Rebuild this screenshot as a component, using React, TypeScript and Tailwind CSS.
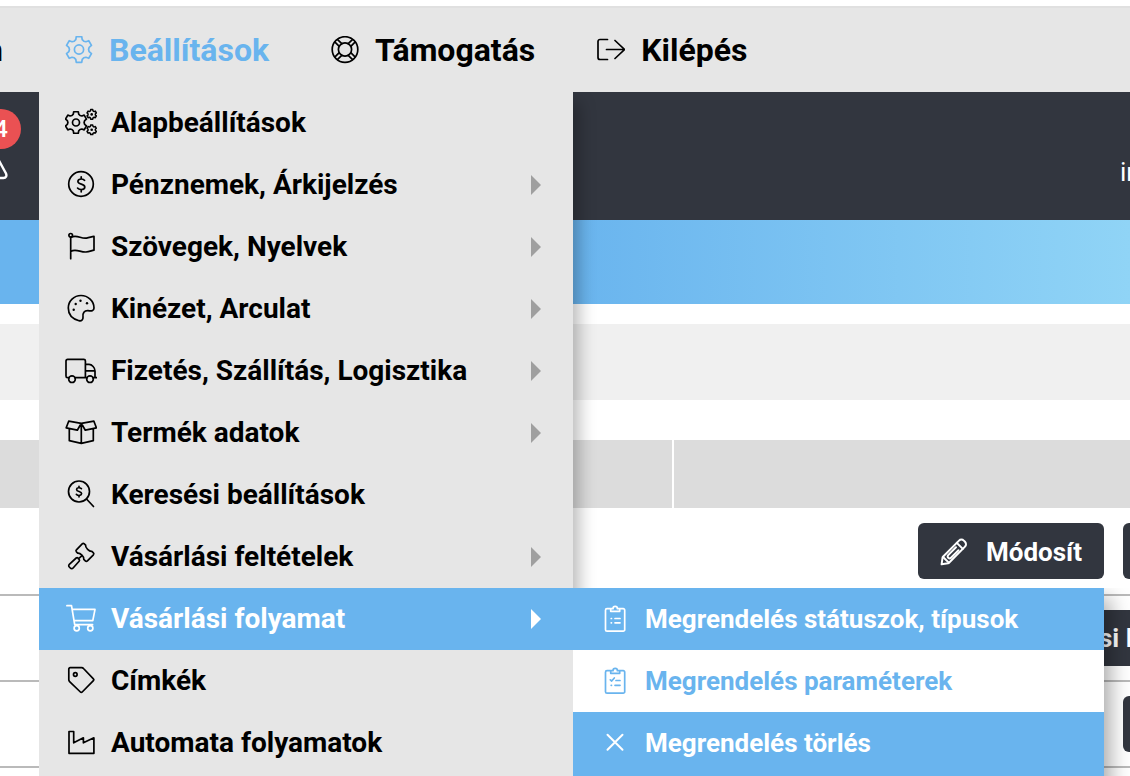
import type { ReactNode } from "react";

function Svg({ children, size = 32, stroke = 1.7 }: { children: ReactNode; size?: 28 | 32; stroke?: number }) {
    return (
        <svg
            className="shrink-0"
            width={size}
            height={size}
            viewBox={`0 0 ${size} ${size}`}
            fill="none"
            stroke="currentColor"
            strokeWidth={stroke}
            strokeLinecap="round"
            strokeLinejoin="round"
            aria-hidden="true"
        >
            {children}
        </svg>
    );
}

// six teeth, the first one points up
function gear(cx: number, cy: number, outer: number, inner: number) {
    const points: string[] = [];
    for (let i = 0; i < 6; i++) {
        const mid = i * 60 - 90;
        [[-18, inner], [-12, outer], [12, outer], [18, inner]].forEach(([angle, r]) => {
            const a = ((mid + angle) * Math.PI) / 180;
            points.push(`${(cx + r * Math.cos(a)).toFixed(2)} ${(cy + r * Math.sin(a)).toFixed(2)}`);
        });
        const next = ((mid + 30) * Math.PI) / 180;
        points.push(`${(cx + inner * 0.92 * Math.cos(next)).toFixed(2)} ${(cy + inner * 0.92 * Math.sin(next)).toFixed(2)}`);
    }
    return `M${points.join("L")}Z`;
}

const icons = {
    gear: <><path d={gear(14, 13.5, 13.1, 10.4)} /><circle cx="14" cy="13.5" r="4.6" /></>,
    support: (
        <>
            <circle cx="14" cy="13.5" r="12.8" />
            <circle cx="14" cy="13.5" r="6.6" />
            <path d="M6.6 3.6l4.2 4M4 6.2l4.2 4.2M21.4 3.6l-4.2 4M24 6.2l-4.2 4.2M6.6 23.4l4.2-4M4 20.8l4.2-4.2M21.4 23.4l-4.2-4M24 20.8l-4.2-4.2" />
        </>
    ),
    exit: <path d="M10.5 3.5H3a2 2 0 0 0-2 2v16a2 2 0 0 0 2 2h7.5M9.5 13.5h18M18 4.5l9.5 9l-9.5 9" />,
    gears: (
        <>
            <path d={gear(11, 15.5, 11, 8.8)} /><circle cx="11" cy="15.5" r="3.5" />
            <g strokeWidth="1.5">
                <path d={gear(26.7, 7.4, 4.9, 3.9)} /><path d={gear(26.7, 22.8, 4.9, 3.9)} />
            </g>
            <g fill="currentColor" stroke="none">
                <circle cx="26.7" cy="7.4" r="1.3" /><circle cx="26.7" cy="22.8" r="1.3" />
            </g>
        </>
    ),
    money: (
        <>
            <circle cx="16" cy="15" r="12.3" />
            <path d="M16.2 7.8v2M16.2 20.5v2.3M19.6 11.3c-1-.8-2.2-1.300-3.400-1.300-2 0-3.300 1-3.300 2.500 0 3.400 6.900 1.900 6.900 5.400 0 1.600-1.400 2.600-3.500 2.600-1.300 0-2.700-.5-3.700-1.400" />
        </>
    ),
    flag: <><circle cx="5.7" cy="4.3" r="1.8" /><path d="M5.7 6.1v21.6M6 6.3c6-3 10 1.800 15.500 0.800 3-.5 5-1.300 7.500-1.700v13.800c-2.500.5-5 1.500-8 1.800C15.500 21.400 11 17.400 5.700 20.400" /></>,
    palette: (
        <>
            <path d="M29 15C29 8 23 2.500 16 2.500S3.300 8 3.300 15c0 6.500 4.500 11 10.700 12.700 2.500.6 4.200-.8 4-3.400C17.200 20.200 19.500 17.300 23 17.600c3.500.6 6 .4 6-2.600z" />
            <g fill="currentColor" stroke="none">
                <circle cx="8.7" cy="16.7" r="1.2" /><circle cx="10.7" cy="11" r="1.2" />
                <circle cx="15.5" cy="7.7" r="1.2" /><circle cx="22" cy="10.3" r="1.2" />
            </g>
        </>
    ),
    truck: (
        <>
            <path d="M3.7 22.7H2.5C1.5 22.7 1 22 1 21V6c0-1 .6-1.600 1.600-1.600h16.200c1 0 1.600.6 1.600 1.600v16.700H10.300M20.400 9.400h3.600c3 0 6 3.300 6 6.500v6.800M21.700 22.700h-1.300M28.300 22.700H32M20.400 15.900H30" />
            <circle cx="7" cy="24.2" r="3.3" /><circle cx="25" cy="24.2" r="3.3" />
        </>
    ),
    box: <path d="M16.3 6.3L3.7 4.200 1.200 10.800l11.100 2.400 4-6.900 12.600-2.100 2.500 6.600-11.100 2.400-4-6.900v20M4.300 12v11.700l12 2.600 12-2.600V12" />,
    search: (
        <>
            <circle cx="14" cy="12.5" r="10.5" /><path d="M21.500 20l7 7.500" />
            <path d="M14 7.400v1.200M14 16.500v1.300M16.400 9.600c-1.600-1.300-4.800-1.200-4.800.8 0 2.500 5 1.700 5 4.200 0 2.200-3.500 2.500-5.200.8" />
        </>
    ),
    gavel: (
        <path d="M17.2 2.900a1.500 1.500 0 0 1 2.100 0l1.300 1.300c-.4 2.600 3.700 6.600 6.300 6.200l1.500 1.400a1.500 1.500 0 0 1 0 2l-6 6a1.500 1.500 0 0 1-2.100 0l-1.500-1.500c.5-2.600-3.500-6.500-6.100-6.200l-1.300-1.300a1.500 1.500 0 0 1 0-2zM16.800 14.800l-3.500 3M11.200 17l-6.900 6.300a1.900 1.900 0 0 0 0 2.700l1 1a1.900 1.900 0 0 0 2.800 0l6-6.700a1.500 1.500 0 0 0 0-2l-1-1.200a1.500 1.500 0 0 0-1.900-.1z" />
    ),
    cart: (
        <>
            <path d="M1.900 2.700h4.600l3.200 19h17.900M7.400 6.400h22.600l-2.200 11.300H9.100" />
            <circle cx="11.7" cy="25.2" r="2.6" /><circle cx="25.3" cy="25.2" r="2.6" />
        </>
    ),
    tag: <><path d="M3.800 4a1.300 1.300 0 0 1 1.300-1.300h11.500c.8 0 1.400.2 1.900.8l9.900 10.300c.6.600.6 1.300 0 1.900L17.200 27a1.200 1.200 0 0 1-1.800 0L4.600 16.600c-.5-.5-.8-1.100-.8-1.800z" /><circle cx="10.3" cy="9.5" r="1.8" /></>,
    factory: <path d="M4 4.500h4.700v11.300l9.700-5v5l10.500-5v15.500H4z" />,
    statuses: <><path d="M12 5.700H8a1.500 1.500 0 0 0-1.500 1.500v19.500A1.500 1.500 0 0 0 8 28.200h16.200a1.500 1.500 0 0 0 1.500-1.500V7.200a1.500 1.500 0 0 0-1.500-1.500h-4M11.700 5.700v2.600h9V5.700h-2.300c0-3-4.400-3-4.400 0z" /><path d="M12.200 15.500h.3M12.200 19.800h.3M16 15.500h5M16 19.800h5" /></>,
    params: <><path d="M12 5.700H8a1.500 1.500 0 0 0-1.500 1.500v19.500A1.500 1.500 0 0 0 8 28.200h16.200a1.500 1.500 0 0 0 1.500-1.500V7.200a1.500 1.500 0 0 0-1.500-1.500h-4M11.700 5.700v2.600h9V5.700h-2.300c0-3-4.400-3-4.400 0z" /><path d="M11.300 14.800l1.400 1.200 2.600-3M12.200 20.300h.3M17 15.500h4M16 20.300h5" /></>,
    cross: <path d="M8.500 7.700l15 15M23.500 7.700l-15 15" strokeWidth="2" />,
    pencil: (
        <>
            <path d="M1.600 26.300l.9-6.500c.1-.5.300-.9.700-1.300L19 2.600a3.400 3.400 0 0 1 4.800 0l1.200 1.200a3.400 3.400 0 0 1 0 4.800L9.300 24.500c-.4.4-.8.600-1.300.7z" />
            <path d="M16.800 4.900l6 6M3.300 19.200l5.200 5.200M18.500 12.200L11 19.800c-1.700 1.700-4.600-.7-2.800-2.700L16 9.200" />
        </>
    ),
};

type IconName = keyof typeof icons;

const settings: { icon: IconName; label: string; sub?: boolean }[] = [
    { icon: "gears", label: "Alapbeállítások" },
    { icon: "money", label: "Pénznemek, Árkijelzés", sub: true },
    { icon: "flag", label: "Szövegek, Nyelvek", sub: true },
    { icon: "palette", label: "Kinézet, Arculat", sub: true },
    { icon: "truck", label: "Fizetés, Szállítás, Logisztika", sub: true },
    { icon: "box", label: "Termék adatok", sub: true },
    { icon: "search", label: "Keresési beállítások" },
    { icon: "gavel", label: "Vásárlási feltételek", sub: true },
    { icon: "cart", label: "Vásárlási folyamat", sub: true },
    { icon: "tag", label: "Címkék" },
    { icon: "factory", label: "Automata folyamatok" },
];

const orderMenu: { icon: IconName; label: string }[] = [
    { icon: "statuses", label: "Megrendelés státuszok, típusok" },
    { icon: "params", label: "Megrendelés paraméterek" },
    { icon: "cross", label: "Megrendelés törlés" },
];

function OrderMenu() {
    return (
        <ul className="absolute left-full top-0 w-[531px] pb-4 bg-[#69b4ee] shadow-[6px_10px_20px_rgba(0,0,0,0.35)] [clip-path:inset(0_-40px_-40px_0)]">
            {orderMenu.map((item) => (
                <li key={item.label}>
                    <a
                        href="#"
                        className={
                            item.icon === "params"
                                ? "flex h-[62px] items-center gap-[14px] pl-[26px] text-[26px] bg-white text-[#69b4ee]"
                                : "flex h-[62px] items-center gap-[14px] pl-[26px] text-[26px] text-white"
                        }
                    >
                        <Svg>{icons[item.icon]}</Svg>
                        {item.label}
                    </a>
                </li>
            ))}
        </ul>
    );
}

// the shadow falls only to the right, the clip cuts it off on the other sides
function SettingsMenu() {
    return (
        <ul className="absolute left-[39px] top-full z-10 w-[534px] pb-4 bg-[#e6e6e6] shadow-[6px_10px_16px_rgba(0,0,0,0.28)] [clip-path:inset(0_-600px_-40px_0)]">
            {settings.map((item) => {
                const open = item.icon === "cart";
                return (
                    <li key={item.label} className="relative">
                        <a
                            href="#"
                            className={
                                open
                                    ? "flex h-[62px] items-center gap-[14px] pl-[26px] pr-8 text-[28px] bg-[#69b4ee] text-white"
                                    : "flex h-[62px] items-center gap-[14px] pl-[26px] pr-8 text-[28px]"
                            }
                        >
                            <Svg>{icons[item.icon]}</Svg>
                            {item.label}
                            {item.sub && (
                                <span
                                    className={
                                        open
                                            ? "ml-auto border-y-[10px] border-l-[10px] border-y-transparent border-l-white"
                                            : "ml-auto border-y-[10px] border-l-[10px] border-y-transparent border-l-[#9f9f9f]"
                                    }
                                />
                            )}
                        </a>
                        {open && <OrderMenu />}
                    </li>
                );
            })}
        </ul>
    );
}

function Topbar() {
    return (
        <nav className="relative mt-[6px] border-t-2 border-[#e0e0e0] bg-[#e6e6e6] font-bold">
            <div className="flex h-[84px] items-center gap-[62px] text-[32px]">
                <a href="#" className="flex w-[3px] justify-end overflow-hidden">n</a>
                <a href="#" className="flex items-center gap-4 text-[#69b4ee]">
                    <Svg size={28}>{icons.gear}</Svg>
                    Beállítások
                </a>
                <a href="#" className="flex items-center gap-4">
                    <Svg size={28}>{icons.support}</Svg>
                    Támogatás
                </a>
                <a href="#" className="flex items-center gap-4">
                    <Svg size={28}>{icons.exit}</Svg>
                    Kilépés
                </a>
            </div>
            <SettingsMenu />
        </nav>
    );
}

function EditButton() {
    return (
        <button className="flex h-14 w-[186px] shrink-0 items-center gap-[18px] rounded-md bg-[#32363f] pl-[22px] pt-0.5 text-white">
            <Svg size={28} stroke={2}>{icons.pencil}</Svg>
            Módosít
        </button>
    );
}

export default function App() {
    return (
        <div className="h-screen overflow-hidden bg-white text-black font-[Roboto,sans-serif]">
            <Topbar />
            <header className="flex h-32 justify-between bg-[#32363f] text-white text-[26px]">
                <a href="#" className="relative w-10 pt-[65px]" aria-label="Értesítések">
                    <svg className="block" width="8" height="24" viewBox="0 0 8 24" fill="none" stroke="currentColor" strokeWidth="2.4">
                        <path d="M-4 -2L6 16.5C7 19 6 21 3.500 21H-4" />
                    </svg>
                    <span className="absolute -left-[19px] top-[17px] flex h-10 w-10 items-center justify-center rounded-full bg-[#ea5153] text-2xl font-medium">4</span>
                </a>
                <span className="w-[10px] overflow-hidden pt-[61px]">in</span>
            </header>
            <div className="h-[84px] bg-linear-to-r from-[#69b4ee] from-50% to-[#90d4f6]" />
            <div className="mt-5 h-[76px] bg-[#f0f0f0]" />
            <table className="mt-10 w-full table-fixed text-left font-bold text-[26px]">
                <thead>
                    <tr className="h-[68px] bg-[#dcdcdc]">
                        <th className="w-[673px] border-r-2 border-white" />
                        <th />
                    </tr>
                </thead>
                <tbody>
                    <tr className="h-[87px] border-b-2 border-[#bababa]">
                        <td />
                        <td>
                            <div className="flex gap-[19px] overflow-hidden pl-[245px]">
                                <EditButton />
                                <button className="h-14 w-[186px] shrink-0 rounded-md bg-[#32363f]" />
                            </div>
                        </td>
                    </tr>
                    <tr className="h-[86px] border-b-2 border-[#bababa]">
                        <td />
                        <td>
                            <div className="flex overflow-hidden pl-[400px]">
                                <button className="flex h-14 w-[300px] shrink-0 items-center rounded-md bg-[#32363f] pl-[26px] text-white">si l</button>
                            </div>
                        </td>
                    </tr>
                    <tr className="h-[86px] border-b-2 border-[#bababa]">
                        <td />
                        <td>
                            <div className="flex gap-[19px] overflow-hidden pl-[245px]">
                                <EditButton />
                                <button className="h-14 w-[186px] shrink-0 rounded-md bg-[#32363f]" />
                            </div>
                        </td>
                    </tr>
                </tbody>
            </table>
        </div>
    );
}
